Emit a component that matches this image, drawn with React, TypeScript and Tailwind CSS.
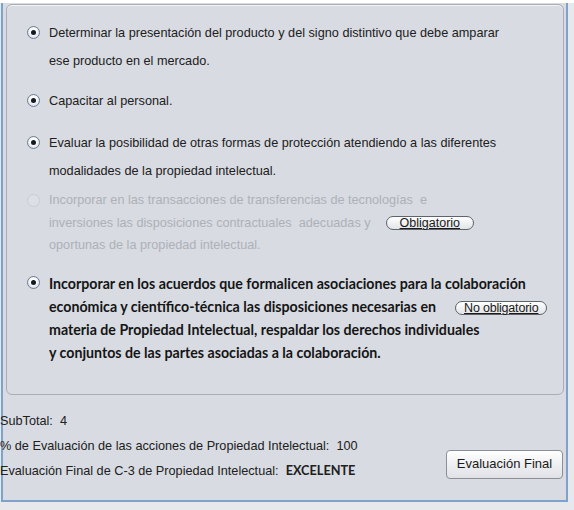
import React from "react"

function Radio({ disabled = false }: { disabled?: boolean }) {
  return (
    <span
      className={
        "mt-[7px] flex h-[13px] w-[13px] shrink-0 items-center justify-center rounded-full border " +
        (disabled
          ? "border-[#c9ccd2] bg-[#dcdfe5]"
          : "border-[#6e7d92] bg-[radial-gradient(circle_at_50%_40%,#ffffff_30%,#c5d0de_100%)]")
      }
    >
      {!disabled && <span className="h-[5px] w-[5px] rounded-full bg-[#151a22]" />}
    </span>
  )
}

function Pill({ label, wide = true }: { label: string; wide?: boolean }) {
  return (
    <span
      className={
        "inline-flex h-[14px] items-center rounded-full border border-[#5f636a] bg-gradient-to-b from-[#ffffff] to-[#e2e4e8] align-middle text-[12.5px] font-normal leading-none text-[#1a1a1a] underline [font-family:'Liberation_Sans',Arial,sans-serif] " +
        (wide ? "ml-[15px] px-[13px]" : "ml-[19px] px-[8px] tracking-[-0.2px]")
      }
    >
      {label}
    </span>
  )
}

export default function App() {
  return (
    <div className="h-[510px] w-[574px] bg-[#e6e8ec] [font-family:'Liberation_Sans',Arial,sans-serif]">
      <div className="h-[3px] bg-white" />
      <div className="ml-[1px] mr-[6px] h-[499px] border-b-2 border-l-2 border-r-2 border-[#7da2ce] bg-[#d8dbe2] pl-[3px] pr-[2px] pt-[1px]">
        {/* panel */}
        <div className="h-[391px] rounded-[6px] border border-[#a9adb4] bg-[#d8dbe2] pl-[20px] pr-[8px] pt-[14px] shadow-[inset_0_1px_0_#f2f3f6]">
          {/* item 1 */}
          <div className="flex gap-[9px] text-[12.7px] leading-[28px] text-[#202020]">
            <Radio />
            <div>
              Determinar la presentación del producto y del signo distintivo que debe amparar
              <br />
              ese producto en el mercado.
            </div>
          </div>
          {/* item 2 */}
          <div className="mt-[12px] flex gap-[9px] text-[12.7px] leading-[28px] text-[#202020]">
            <Radio />
            <div>Capacitar al personal.</div>
          </div>
          {/* item 3 */}
          <div className="mt-[14px] flex gap-[9px] text-[12.7px] leading-[28px] text-[#202020]">
            <Radio />
            <div>
              Evaluar la posibilidad de otras formas de protección atendiendo a las diferentes
              <br />
              modalidades de la propiedad intelectual.
            </div>
          </div>
          {/* item 4 disabled */}
          <div className="mt-[4px] flex gap-[9px] text-[12.7px] leading-[22.5px] text-[#adb1b7]">
            <span className="-mt-[2px]">
              <Radio disabled />
            </span>
            <div>
              Incorporar en las transacciones de transferencias de tecnologías&nbsp; e
              <br />
              inversiones las disposiciones contractuales&nbsp; adecuadas y
              <Pill label="Obligatorio" />
              <br />
              oportunas de la propiedad intelectual.
            </div>
          </div>
          {/* item 5 bold */}
          <div className="mt-[15px] flex gap-[9px] text-[14.2px] font-bold leading-[23px] text-[#151515] [font-family:Lato,'Liberation_Sans',sans-serif]">
            <span className="-mt-[3px]">
              <Radio />
            </span>
            <div>
              Incorporar en los acuerdos que formalicen asociaciones para la colaboración
              <br />
              económica y científico-técnica las disposiciones necesarias en
              <Pill label="No obligatorio" wide={false} />
              <br />
              materia de Propiedad Intelectual, respaldar los derechos individuales
              <br />y conjuntos de las partes asociadas a la colaboración.
            </div>
          </div>
        </div>

        {/* footer */}
        <div className="-ml-[6px] mt-[14px] flex items-end justify-between pr-[1px] text-[12.7px] leading-[24.5px] text-[#202020]">
          <div>
            <div>SubTotal:&nbsp; 4</div>
            <div>% de Evaluación de las acciones de Propiedad Intelectual:&nbsp; 100</div>
            <div>
              Evaluación Final de C-3 de Propiedad Intelectual:&nbsp;{" "}
              <span className="font-bold [font-family:Lato,'Liberation_Sans',sans-serif]">EXCELENTE</span>
            </div>
          </div>
          <button className="mb-[5px] h-[29px] w-[117px] rounded-[4px] border border-[#8b8f96] bg-gradient-to-b from-[#ffffff] to-[#dfe1e5] text-[13px] text-[#1a1a1a] shadow-[inset_0_1px_0_#ffffff]">
            Evaluación Final
          </button>
        </div>
      </div>
    </div>
  )
}
